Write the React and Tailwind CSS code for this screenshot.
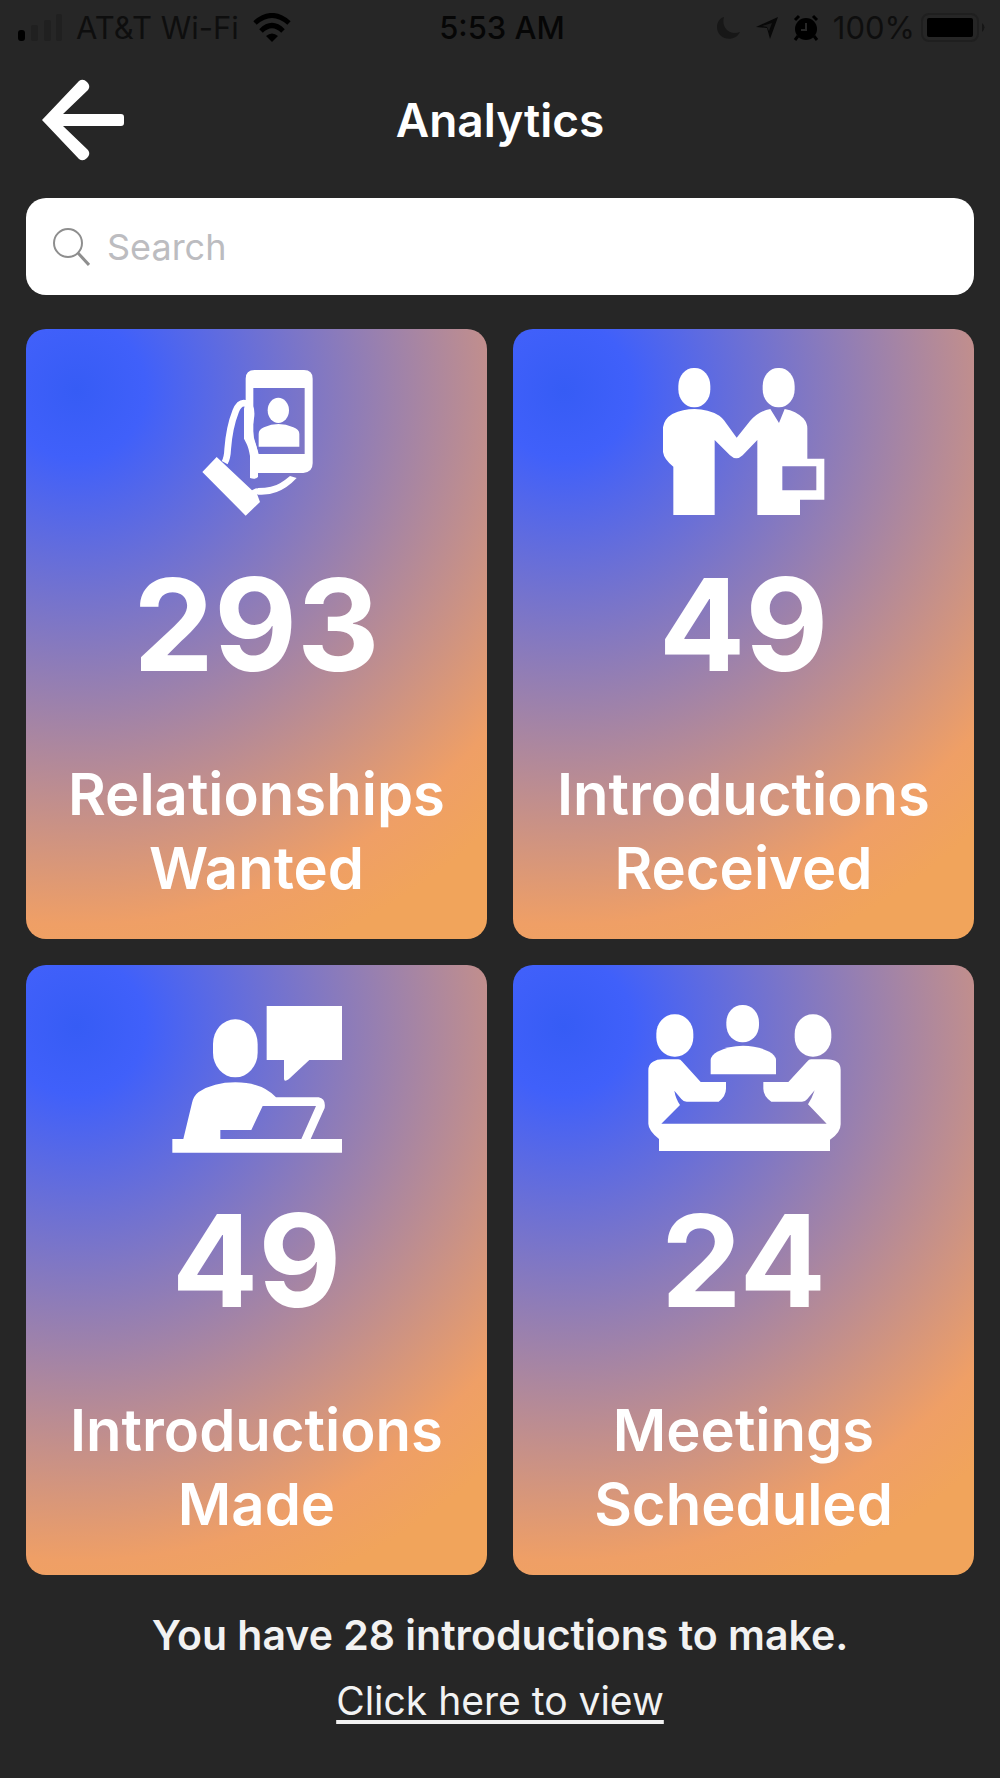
import React, { useState } from "react";

const PhoneContactIcon = () => (
  <svg viewBox="-114 35 630 450" className="h-[150px] w-[210px]" fill="currentColor" aria-hidden="true">
    <path
      fillRule="evenodd"
      d="M194 44h148q26 0 26 26v254q0 27-28 29H204v12q-8 9-24 3v-66q-4-24-10-36l-8-16V160q4-16 5-20V70q0-26 27-26zM190 98v130l2 20 14 48h138V98z"
    />
    <ellipse cx="265" cy="165" rx="32" ry="38" />
    <path d="M206 274v-38q0-14 16-20 43-20 88 0 18 6 18 20v38z" />
    <path
      d="M104 322q8-14 9-40 5-66 24-114 12-30 32-23 16 6 14 36-2 22-8 40-2 14 2 26 12 20 16 42l-2 76"
      fill="none"
      stroke="currentColor"
      strokeWidth="20"
    />
    <path d="M80 305l106 100 14-7 2 20 8 22-43 41L37 350z" />
    <path d="M190 408l14-10q44 0 66-14 16-10 30-22l20 6q-28 30-60 42-24 10-56 8z" />
  </svg>
);

const HandshakeIcon = () => (
  <svg viewBox="-5 35 630 450" className="h-[150px] w-[210px]" fill="currentColor" aria-hidden="true">
    <rect x="113" y="38" width="96" height="118" rx="46" ry="54" />
    <rect x="366" y="38" width="96" height="118" rx="46" ry="54" />
    <path
      fillRule="evenodd"
      d="M98 479V334Q70 312 67 290V216q4-26 28-40 32-15 67-15 40 0 74 20 8 6 14 14l38 52 40-50q26-30 61-36l26 42 17-42q34 6 56 28 12 14 12 30v91h51v123h-73v46H350V254l-44 46q-19 18-38 0l-46-46v225zM425 333v72h102v-72z"
    />
  </svg>
);

const LaptopChatIcon = () => (
  <svg viewBox="-25 24 630 450" className="h-[150px] w-[210px]" fill="currentColor" aria-hidden="true">
    <path d="M319 33h226v162h-98l-62 58q-14 9-14-2v-56h-52z" />
    <rect x="158" y="73" width="134" height="174" rx="66" ry="74" />
    <path
      fillRule="evenodd"
      d="M36 432h33l26-108q5-22 20-33 45-29 110-29 80 0 122 45h128q22 4 18 32l-42 93h94v41H36zM180 432h243l44-99H307l-34 72h-93z"
    />
  </svg>
);

const MeetingIcon = () => (
  <svg viewBox="25 24 630 450" className="h-[150px] w-[210px]" fill="currentColor" aria-hidden="true">
    <rect x="77" y="58" width="111" height="127" rx="54" ry="58" />
    <rect x="287" y="30" width="98" height="112" rx="48" ry="52" />
    <rect x="492" y="58" width="110" height="127" rx="54" ry="58" />
    <path d="M240 238v-44q2-14 20-24 34-18 77-18t79 18q18 10 20 24v44z" />
    <path d="M53 226q0-18 14-26 12-7 28-7h48q6 0 12 7l55 61h76v20q0 22-22 39h-96q-10 0-16-8l-21-25q4 24 17 43l-56 56h496l-56-58q12-18 20-42l-22 26q-6 8-16 8h-92q-24-17-24-39v-20h75l56-61q6-7 12-7h46q44 0 43 33v162q0 26-32 46v34H85v-36q-32-26-32-46z" />
  </svg>
);

const STATS = [
  { value: 293, label: "Relationships Wanted", icon: <PhoneContactIcon /> },
  { value: 49, label: "Introductions Received", icon: <HandshakeIcon /> },
  { value: 49, label: "Introductions Made", icon: <LaptopChatIcon /> },
  { value: 24, label: "Meetings Scheduled", icon: <MeetingIcon /> },
];

const StatusBar = () => (
  <div className="grid h-[56px] grid-cols-[1fr_auto_1fr] items-center pr-[14px] pl-[18px] text-[31px] leading-[36px] text-[#0e0e0e]">
    <div className="flex items-center gap-[14px]">
      <svg viewBox="0 0 44 28" className="h-7 w-11" aria-hidden="true">
        <rect x="0" y="16" width="7" height="11" rx="3" fill="#000" />
        <rect x="13" y="11" width="7" height="16" rx="2" fill="#202020" />
        <rect x="26" y="6" width="7" height="21" rx="2" fill="#202020" />
        <rect x="38" y="0" width="6" height="27" rx="2" fill="#202020" />
      </svg>
      <span>AT&amp;T Wi-Fi</span>
      <svg viewBox="0 0 38 30" className="h-[30px] w-[38px]" fill="none" stroke="#000" strokeWidth="5" aria-hidden="true">
        <path d="M2 10Q19-5 36 10" />
        <path d="M8 18Q19 7 30 18" />
        <path d="M19 29l-6-6q6-5 12 0z" fill="#000" stroke="none" />
      </svg>
    </div>
    <span className="font-medium text-[#060606]">5:53 AM</span>
    <div className="flex items-center justify-end gap-[14px]">
      <svg viewBox="0 0 24 24" className="h-6 w-6" fill="#171717" aria-hidden="true">
        <path d="M7 1C4 11 12 20 23 16 18 27 0 24 0 11 0 6 3 2 7 1z" />
      </svg>
      <svg viewBox="0 0 24 24" className="h-6 w-6" aria-hidden="true">
        <path d="M23 1L15 23 12 12 1 11z" fill="#080808" />
        <path d="M17 7l-3 8-2-4-5-1z" fill="#1c1c1c" />
      </svg>
      <svg viewBox="0 0 26 28" className="h-7 w-[26px]" aria-hidden="true">
        <circle cx="13" cy="15" r="11" fill="#000" />
        <path d="M2 6l4-4M24 6l-4-4M5 22l-3 4M21 22l3 4" stroke="#000" strokeWidth="3" />
        <path d="M13 9v7H8" fill="none" stroke="#262626" strokeWidth="2" />
      </svg>
      <span>100%</span>
      <svg viewBox="0 0 65 30" className="-ml-2 h-[30px] w-[65px]" aria-hidden="true">
        <rect x="1" y="1" width="56" height="27" rx="7" fill="none" stroke="#1f1f1f" strokeWidth="2" />
        <rect x="6" y="5" width="46" height="19" rx="2" fill="#000" />
        <path d="M61 10q5 4 0 9z" fill="#161616" />
      </svg>
    </div>
  </div>
);

const StatCard = ({ value, label, icon }) => (
  <button
    type="button"
    className="flex h-[610px] flex-col items-center rounded-[20px] bg-[radial-gradient(circle_at_11%_10%,#365cf5_0%,#4060fa_10%,#ef9f66_78%,#f1a45b_88%)] px-6 pt-[38px] text-white"
  >
    {icon}
    <span className="mt-[31px] text-[128px] leading-[154px] font-bold">{value}</span>
    <span className="mt-[55px] w-min text-[58px] leading-[74px] font-semibold">{label}</span>
  </button>
);

const App = () => {
  const [search, setSearch] = useState("");

  return (
    <div className="min-h-screen bg-[#262626] font-[Inter,sans-serif] text-white">
      <StatusBar />

      <header className="grid h-[142px] grid-cols-[84px_1fr_84px] items-center px-[42px] pb-[14px]">
        <button type="button" aria-label="Back">
          <svg viewBox="0 0 84 84" className="h-[84px] w-[84px]" fill="currentColor" aria-hidden="true">
            <path d="M0 42L37 3q4-3 8 1 4 4 1 8L21 36h58q3 0 3 3v6q0 3-3 3H21l25 24q3 4-1 8-4 4-8 1z" />
          </svg>
        </button>
        <h1 className="text-center text-[46px] leading-[58px] font-semibold">Analytics</h1>
      </header>

      <main className="px-[26px]">
        <label className="flex h-[97px] items-center gap-[17px] rounded-[20px] bg-white px-[26px]">
          <svg viewBox="0 0 38 38" className="h-[38px] w-[38px] shrink-0" fill="none" stroke="#8e8e8e" strokeWidth="2" aria-hidden="true">
            <circle cx="16" cy="15" r="14" />
            <path d="M26 25l11 12" strokeWidth="3" />
          </svg>
          <input
            type="text"
            aria-label="Search"
            placeholder="Search"
            value={search}
            onChange={(e) => setSearch(e.target.value)}
            className="w-full bg-transparent text-[36px] leading-[44px] text-black outline-none placeholder:text-[#bcbcc0]"
          />
        </label>

        <div className="mt-[34px] grid grid-cols-2 gap-[26px]">
          {STATS.map((stat) => (
            <StatCard key={stat.label} {...stat} />
          ))}
        </div>
      </main>

      <footer className="flex flex-col items-center pt-[32px] pb-[44px] text-[#f2f2f2]">
        <p className="text-[41px] leading-[56px] font-semibold">You have 28 introductions to make.</p>
        <a
          href="#introductions"
          className="mt-[10px] text-[39px] leading-[56px] underline decoration-[4px] underline-offset-[5px]"
        >
          Click here to view
        </a>
      </footer>
    </div>
  );
};

export default App;
